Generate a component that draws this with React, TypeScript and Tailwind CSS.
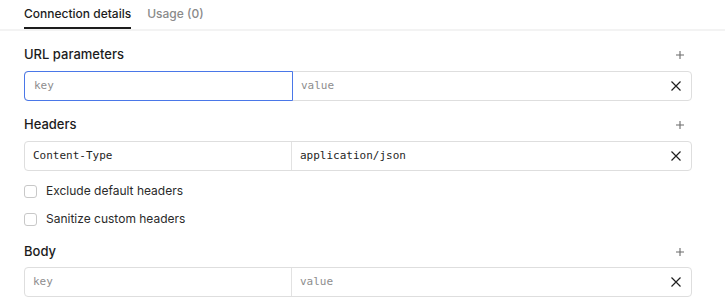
import React from "react";

const mono = { fontFamily: '"DejaVu Sans Mono", "Liberation Mono", monospace' };

function PlusIcon() {
  return (
    <svg width="10" height="10" viewBox="0 0 10 10" className="text-[#6b6b6b]">
      <path d="M5 1v8M1 5h8" stroke="currentColor" strokeWidth="1.1" fill="none" />
    </svg>
  );
}

function XIcon() {
  return (
    <svg width="12" height="12" viewBox="0 0 12 12" className="text-[#1f1f1f]">
      <path d="M1.5 1.5l9 9M10.5 1.5l-9 9" stroke="currentColor" strokeWidth="1.2" fill="none" />
    </svg>
  );
}

function Heading({ title }: { title: string }) {
  return (
    <div className="flex h-5 items-center justify-between">
      <span className="text-[13px] font-medium text-[#1c1c1c]">{title}</span>
      <span className="mr-[7px] flex items-center">
        <PlusIcon />
      </span>
    </div>
  );
}

function Row({
  keyText,
  valueText,
  focused,
  gap,
}: {
  keyText?: string;
  valueText?: string;
  focused?: boolean;
  gap: string;
}) {
  return (
    <div className={`${gap} flex h-[30px] w-[668px] rounded-[4px] border border-[#dedede] text-[11px]`} style={mono}>
      <div
        className={
          focused
            ? "-my-px -ml-px flex w-[269px] items-center rounded-l-[4px] border border-[#4a77e8] pl-[9px]"
            : "flex w-[267px] items-center border-r border-[#e2e2e2] pl-2"
        }
      >
        {keyText ? (
          <span className="text-[#1f1f1f]">{keyText}</span>
        ) : (
          <span className="text-[#8e8e8e]">key</span>
        )}
      </div>
      <div className="flex flex-1 items-center justify-between pl-2 pr-[9px]">
        {valueText ? (
          <span className="text-[#1f1f1f]">{valueText}</span>
        ) : (
          <span className="text-[#8e8e8e]">value</span>
        )}
        <XIcon />
      </div>
    </div>
  );
}

function Check({ label }: { label: string }) {
  return (
    <div className="flex h-5 items-center">
      <span className="h-[13px] w-[13px] rounded-[3px] border border-[#c8c8c8] bg-white" />
      <span className="ml-[9px] text-[12px] text-[#2a2a2a]">{label}</span>
    </div>
  );
}

export default function App() {
  return (
    <div
      className="h-[305px] w-[725px] overflow-hidden bg-white"
      style={{ fontFamily: 'Inter, "Noto Sans", sans-serif' }}
    >
      <div className="flex h-[31px] border-b-2 border-[#f3f3f3] pl-6">
        <div className="-mb-[2px] flex h-[29px] items-start border-b-2 border-[#1c1c1c] pt-[5px] text-[12px] font-medium text-[#1c1c1c]">
          Connection details
        </div>
        <div className="ml-4 pt-[5px] text-[12px] font-medium text-[#8a8a8a]">Usage (0)</div>
      </div>
      <div className="pl-6 pr-[33px]">
        <div className="mt-[14px]">
          <Heading title="URL parameters" />
          <Row focused gap="mt-[6px]" />
        </div>
        <div className="mt-[14px]">
          <Heading title="Headers" />
          <Row keyText="Content-Type" valueText="application/json" gap="mt-[6px]" />
        </div>
        <div className="mt-[10px] flex flex-col gap-2">
          <Check label="Exclude default headers" />
          <Check label="Sanitize custom headers" />
        </div>
        <div className="mt-[13px]">
          <Heading title="Body" />
          <Row gap="mt-[5px]" />
        </div>
      </div>
    </div>
  );
}
